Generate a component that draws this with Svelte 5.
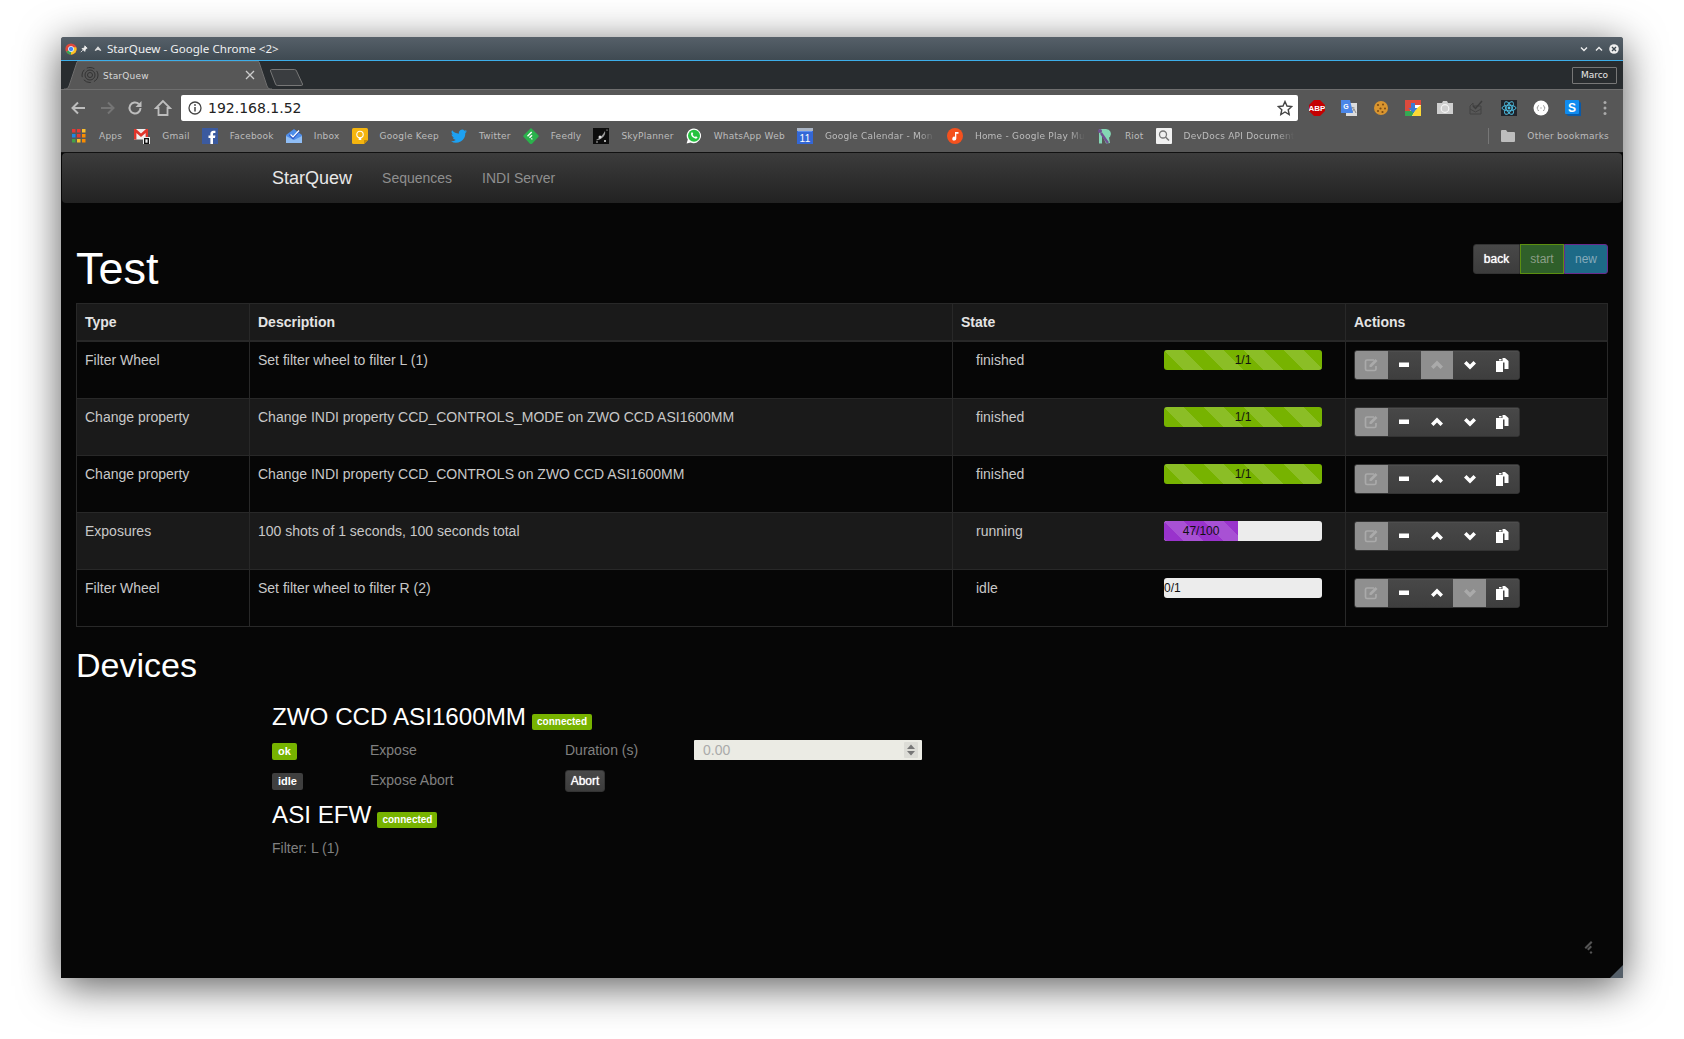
<script>
  const bookmarks = [
    { label: "Apps", svg: `<g><rect x="1" y="1" width="3.5" height="3.5" fill="#e53935"/><rect x="6" y="1" width="3.5" height="3.5" fill="#e53935"/><rect x="11" y="1" width="3.5" height="3.5" fill="#fbc02d"/><rect x="1" y="6" width="3.5" height="3.5" fill="#1e88e5"/><rect x="6" y="6" width="3.5" height="3.5" fill="#e53935"/><rect x="11" y="6" width="3.5" height="3.5" fill="#fb8c00"/><rect x="1" y="11" width="3.5" height="3.5" fill="#43a047"/><rect x="6" y="11" width="3.5" height="3.5" fill="#fbc02d"/><rect x="11" y="11" width="3.5" height="3.5" fill="#fb8c00"/></g>` },
    { label: "Gmail", svg: `<rect y="1" width="14" height="10.5" fill="#eee"/><path d="M0 1h2l5 4.500L12 1h2v10.500h-2.400V5L7 9 2.400 5v6.500H0z" fill="#e0352b"/><rect x="9" y="9" width="7" height="7" fill="#eee"/><rect x="10" y="10" width="5" height="6" fill="#111"/><rect x="11.400" y="11.300" width="2.200" height="3.400" fill="#eee"/>` },
    { label: "Facebook", svg: `<rect width="16" height="16" fill="#3b5a9f"/><path d="M11 16V10h2l.4-2.500H11V6.200c0-.8.3-1.200 1.200-1.200h1.200V2.700h-2C9.400 2.700 8.400 4 8.400 5.800v1.700H6.500V10h1.900v6z" fill="#fff"/>` },
    { label: "Inbox", svg: `<path d="M0 7l8-6 8 6v8H0z" fill="#4f8ee8"/><path d="M0 8l8 4 8-4v7H0z" fill="#8fbdf5"/><path d="M4 6l3 3 6-6.500 1 1-7 8-4-4z" fill="#2a54c8"/><path d="M4.500 6.500l2.500 2.500 6-6.500" fill="none" stroke="#fff" stroke-width="1.200"/>` },
    { label: "Google Keep", svg: `<path d="M0 1.500Q0 0 1.500 0h13Q16 0 16 1.500V12l-4 4H1.500Q0 16 0 14.500z" fill="#f5b50f"/><path d="M12 16v-4h4z" fill="#c98f08"/><circle cx="8" cy="6.500" r="3.200" fill="none" stroke="#fff" stroke-width="1.100"/><path d="M6.700 9.500h2.600v2.500H6.700z" fill="#fff"/>` },
    { label: "Twitter", svg: `<path d="M16 3.200c-.6.300-1.200.4-1.900.5.700-.4 1.200-1 1.400-1.800-.6.400-1.300.6-2 .8a3.300 3.300 0 0 0-5.600 3A9.300 9.300 0 0 1 1.100 2.300a3.300 3.300 0 0 0 1 4.400c-.5 0-1-.2-1.500-.4 0 1.600 1.100 2.900 2.600 3.200-.5.100-1 .2-1.500.1.400 1.300 1.600 2.200 3 2.300A6.600 6.600 0 0 1 0 13.200 9.300 9.300 0 0 0 14.300 5c.7-.4 1.200-1.100 1.700-1.800z" fill="#1da1f2"/>` },
    { label: "Feedly", svg: `<path d="M8 0l7.300 7.300a1.200 1.200 0 0 1 0 1.700L9.500 15.300a2 2 0 0 1-3 0L.7 9a1.200 1.200 0 0 1 0-1.700z" fill="#2bb24c"/><path d="M8.200 3.500L4 7.800l1 1 4.200-4.300zM8.500 6.800L6 9.300l1 1 2.500-2.500zM8.800 10L8 10.800l.9.900.8-.8z" fill="#fff"/>` },
    { label: "SkyPlanner", svg: `<rect width="16" height="16" fill="#0c0c0c"/><path d="M3 12Q9 9 12 3q1 4-3 7T3 12z" fill="#999"/><circle cx="7" cy="9" r="1.500" fill="#ddd"/><circle cx="4" cy="14" r=".8" fill="#ccc"/><circle cx="12" cy="13" r="1" fill="#ddd"/><circle cx="14" cy="2" r=".6" fill="#eee"/>` },
    { label: "WhatsApp Web", svg: `<path d="M8 .5a7.300 7.300 0 0 0-6.200 11.100L.6 15.500l4-1.100A7.300 7.300 0 1 0 8 .5z" fill="#fff"/><circle cx="8" cy="7.800" r="6" fill="#25c23f"/><path d="M5.500 4.500c.5-.5 1-.3 1.200.2l.5 1.200-.6.900c.5 1 1.300 1.800 2.400 2.300l.9-.8 1.300.7c.4.200.4.700 0 1.100-1 1-2.300.7-4-.5C5.300 8.300 4.300 5.800 5.500 4.500z" fill="#fff"/>` },
    { label: "Google Calendar - Mon", cut: true, svg: `<rect y="1" width="16" height="15" fill="#3367d6"/><rect y="0" width="16" height="3" fill="#aab4c4"/><rect x="1" y="3" width="14" height="1" fill="#5a8cf0"/><text x="8" y="14" font-size="10" text-anchor="middle" fill="#fff" font-family="Liberation Sans, sans-serif">11</text>` },
    { label: "Home - Google Play Music", cut: true, svg: `<circle cx="8" cy="8" r="8" fill="#f4511e"/><path d="M8 4h3.500v1.800H9.300v4.700a2 2 0 1 1-1.300-1.800z" fill="#fff"/>` },
    { label: "Riot", svg: `<path d="M2 1h7a5 5 0 0 1 4 8l-1 .5L13 15l-4 .5L6 9H5v6.500H2z" fill="#84d6b4"/><circle cx="3" cy="3" r="2" fill="#6f4f8f"/><path d="M4 5l7 10" stroke="#6f4f8f" stroke-width="2.400"/>` },
    { label: "DevDocs API Documentation", cut: true, svg: `<rect width="16" height="16" rx="1" fill="#f1f1f1"/><circle cx="7" cy="6.500" r="3.500" fill="none" stroke="#777" stroke-width="1.300"/><path d="M9.500 9l3.500 3.500" stroke="#777" stroke-width="1.500"/>` }
  ];

  const extensions = [
    `<path d="M5 0h6l5 5v6l-5 5H5l-5-5V5z" fill="#c40000"/><text x="8" y="11" font-size="8" font-weight="700" text-anchor="middle" fill="#fff" font-family="Liberation Sans, sans-serif">ABP</text>`,
    `<rect x="5" y="3" width="11" height="13" fill="#dcdcdc"/><path d="M10 8l3.500 0M11.800 7v1M10.500 13l2.500-4 2 4" stroke="#8a8a8a" fill="none"/><path d="M0 0h9l3 13H0z" fill="#4a86e8"/><text x="5" y="9" font-size="7" font-weight="700" text-anchor="middle" fill="#fff" font-family="Liberation Sans, sans-serif">G</text>`,
    `<circle cx="8" cy="8" r="7" fill="#d9952f"/><circle cx="5" cy="5" r="1.100" fill="#7a4a12"/><circle cx="10" cy="4.500" r="1" fill="#7a4a12"/><circle cx="7.500" cy="8.500" r="1.100" fill="#7a4a12"/><circle cx="12" cy="8.500" r="1" fill="#7a4a12"/><circle cx="5" cy="11" r="1" fill="#7a4a12"/><circle cx="9.500" cy="12" r="1.100" fill="#7a4a12"/>`,
    `<rect width="16" height="16" fill="#fff"/><path d="M0 0h16v5H8L3 16H0z" fill="#dd4a3d"/><path d="M0 11v5h7l3-5z" fill="#35a853"/><path d="M16 5v11H7l4-7z" fill="#fdd835"/><path d="M6 3h4v5h2.500L8 13 3.500 8H6z" fill="#3a7bd5"/>`,
    `<path d="M0 3h5l1-2h4l1 2h5v11H0z" fill="#cfcfcf"/><circle cx="8" cy="8.500" r="3.800" fill="#cfcfcf" stroke="#f5f5f5" stroke-width="1.200"/>`,
    `<path d="M1 6l3-3v3h8v8H1z" fill="none" stroke="#434343"/><path d="M1 9l5.500 3L12 9" fill="none" stroke="#434343"/><path d="M4 6l2.500 2.500L13 1" fill="none" stroke="#3d3d3d" stroke-width="1.500"/>`,
    `<rect width="16" height="16" fill="#20232a"/><g fill="none" stroke="#4fc3e8" stroke-width=".9"><ellipse cx="8" cy="8" rx="7" ry="2.800"/><ellipse cx="8" cy="8" rx="7" ry="2.800" transform="rotate(60 8 8)"/><ellipse cx="8" cy="8" rx="7" ry="2.800" transform="rotate(120 8 8)"/></g><circle cx="8" cy="8" r="1.400" fill="#4fc3e8"/>`,
    `<circle cx="8" cy="8" r="7.500" fill="#fff"/><path d="M6 5.500Q4.700 5.500 4.700 7T3.800 8q.9 0 .9 1.500T6 10.500M10 5.500q1.300 0 1.300 1.500t.9 1q-.9 0-.9 1.500T10 10.500M7.300 8h1.400" fill="none" stroke="#999" stroke-width=".9"/>`,
    `<path d="M1 14V1h13l2 2v13H3z" fill="#0a5aa8"/><rect width="14" height="14" rx="1" fill="#0f8cf0"/><text x="7" y="11.500" font-size="12" font-weight="700" text-anchor="middle" fill="#fff" font-family="Liberation Sans, sans-serif">S</text>`
  ];

  const steps = [
    { type: "Filter Wheel", desc: "Set filter wheel to filter L (1)", state: "finished", pct: 100, text: "1/1", tone: "green", first: true },
    { type: "Change property", desc: "Change INDI property CCD_CONTROLS_MODE on ZWO CCD ASI1600MM", state: "finished", pct: 100, text: "1/1", tone: "green" },
    { type: "Change property", desc: "Change INDI property CCD_CONTROLS on ZWO CCD ASI1600MM", state: "finished", pct: 100, text: "1/1", tone: "green" },
    { type: "Exposures", desc: "100 shots of 1 seconds, 100 seconds total", state: "running", pct: 47, text: "47/100", tone: "purple" },
    { type: "Filter Wheel", desc: "Set filter wheel to filter R (2)", state: "idle", pct: 0, text: "0/1", tone: "green", last: true }
  ];
</script>

<div class="window">
  <div class="titlebar">
    <svg class="chromeicon" width="12" height="12" viewBox="0 0 16 16">
      <circle cx="8" cy="8" r="7.500" fill="#e0483a" />
      <path d="M8 8L1.500 11.800A7.500 7.500 0 0 0 8 15.500z" fill="#35a853" />
      <path d="M8 8v7.500A7.500 7.500 0 0 0 15 5.500H8z" fill="#f7c325" />
      <circle cx="8" cy="8" r="3.500" fill="#4285f4" stroke="#fff" />
    </svg>
    <svg class="pin" width="8" height="8" viewBox="0 0 10 10"><path d="M6 1l3 3-1 .5-1.500 1.500-.5 2L2.500 4.500l2-.5L6 2.500zM3.500 6.500L1 9" fill="#eee" stroke="#eee" /></svg>
    <svg class="keep" width="8" height="8" viewBox="0 0 12 10"><path d="M6 1l5 6-1 1-4-2-4 2-1-1z" fill="#ddd" /></svg>
    <span class="title">StarQuew - Google Chrome &lt;2&gt;</span>
    <span class="spacer"></span>
    <svg width="10" height="10" viewBox="0 0 10 10"><path d="M2 3.500L5 6.500L8 3.500" fill="none" stroke="#eee" stroke-width="1.400" /></svg>
    <svg width="10" height="10" viewBox="0 0 10 10"><path d="M2 6.500L5 3.500L8 6.500" fill="none" stroke="#eee" stroke-width="1.400" /></svg>
    <svg width="10" height="10" viewBox="0 0 10 10"><circle cx="5" cy="5" r="4.800" fill="#eee" /><path d="M3 3l4 4M7 3l-4 4" stroke="#3d4850" stroke-width="1.400" /></svg>
  </div>

  <div class="tabbar">
    <div class="tab">
      <svg class="tabshape" width="208" height="28" viewBox="0 0 208 28"><path d="M0 28h2q2 0 3-3L13 1q.5-1 2-1h178q1.500 0 2 1l8 24q1 3 3 3h2" fill="#575757" stroke="#6e6e6e" /></svg>
      <svg class="favicon" width="18" height="18" viewBox="0 0 18 18"><g fill="none" stroke="#333"><circle cx="9" cy="9" r="2.500" /><circle cx="9" cy="9" r="5" /><ellipse cx="9" cy="9" rx="8" ry="7.500" stroke-dasharray="8 3" /></g></svg>
      <span>StarQuew</span>
      <svg class="close" width="10" height="10" viewBox="0 0 10 10"><path d="M1 1l8 8M9 1l-8 8" stroke="#ccc" stroke-width="1.300" /></svg>
    </div>
    <svg class="newtab" width="34" height="17" viewBox="0 0 34 17"><path d="M1.500.5h23q1.500 0 2 1.500l6 13q.3 1.500-1 1.500H7.500q-1.500 0-2-1.500L.5 2q-.3-1.500 1-1.500z" fill="#3a3d40" stroke="#777" /></svg>
    <span class="spacer"></span>
    <div class="profile">Marco</div>
  </div>

  <div class="toolbar">
    <svg width="18" height="18" viewBox="0 0 18 18"><path d="M15 9H3M8 3.500L2.500 9 8 14.500" fill="none" stroke="#bdbdbd" stroke-width="2" /></svg>
    <svg width="18" height="18" viewBox="0 0 18 18"><path d="M3 9h12M10 3.500L15.500 9 10 14.500" fill="none" stroke="#757575" stroke-width="2" /></svg>
    <svg width="18" height="18" viewBox="0 0 18 18"><path d="M14.500 9A5.500 5.500 0 1 1 12.800 5" fill="none" stroke="#bdbdbd" stroke-width="2" /><path d="M15.500 2v6h-6z" fill="#bdbdbd" /></svg>
    <svg width="18" height="18" viewBox="0 0 18 18"><path d="M9 2L2 9h2.500v7h9V9H16z" fill="none" stroke="#bdbdbd" stroke-width="1.800" /></svg>
    <div class="omnibox">
      <svg width="14" height="14" viewBox="0 0 14 14"><circle cx="7" cy="7" r="6" fill="none" stroke="#444" stroke-width="1.300" /><path d="M7 6v4.500" stroke="#444" stroke-width="1.500" /><circle cx="7" cy="4" r=".9" fill="#444" /></svg>
      <span class="url">192.168.1.52</span>
      <span class="spacer"></span>
      <svg width="16" height="16" viewBox="0 0 16 16"><path d="M8 1.500l2 4.500 4.800.5-3.600 3.200 1 4.800L8 12l-4.200 2.500 1-4.800L1.200 6.500 6 6z" fill="none" stroke="#444" stroke-width="1.400" /></svg>
    </div>
    <div class="exts">
      {#each extensions as ext}
        <svg width="16" height="16" viewBox="0 0 16 16">{@html ext}</svg>
      {/each}
      <svg class="dots" width="4" height="16" viewBox="0 0 4 16"><circle cx="2" cy="2.500" r="1.500" fill="#aaa" /><circle cx="2" cy="8" r="1.500" fill="#aaa" /><circle cx="2" cy="13.500" r="1.500" fill="#aaa" /></svg>
    </div>
  </div>

  <div class="bookmarks">
    {#each bookmarks as b}
      <div class="bm">
        <svg width="16" height="16" viewBox="0 0 16 16">{@html b.svg}</svg>
        <span class:cut={b.cut}>{b.label}</span>
      </div>
    {/each}
    <span class="spacer"></span>
    <i class="sep"></i>
    <div class="bm other">
      <svg width="14" height="12" viewBox="0 0 14 12"><path d="M0 1q0-1 1-1h4l1.500 2H13q1 0 1 1v8q0 1-1 1H1q-1 0-1-1z" fill="#bdbdbd" /></svg>
      <span>Other bookmarks</span>
    </div>
  </div>

  <div class="app">
    <nav class="navbar">
      <a class="brand" href="#top">StarQuew</a>
      <a href="#top">Sequences</a>
      <a href="#top">INDI Server</a>
    </nav>

    <main>
      <header>
        <h1>Test</h1>
        <div class="btn-group top">
          <button class="btn">back</button>
          <button class="btn start">start</button>
          <button class="btn new">new</button>
        </div>
      </header>

      <table>
        <colgroup>
          <col style="width: 173px" />
          <col style="width: 703px" />
          <col style="width: 393px" />
          <col />
        </colgroup>
        <thead>
          <tr>
            <th>Type</th>
            <th>Description</th>
            <th>State</th>
            <th>Actions</th>
          </tr>
        </thead>
        <tbody>
          {#each steps as step}
            <tr>
              <td>{step.type}</td>
              <td>{step.desc}</td>
              <td>
                <div class="state">
                  <span>{step.state}</span>
                  <div class="progress">
                    {#if step.pct > 0}
                      <div class="bar {step.tone}" style="width: {step.pct}%">{step.text}</div>
                    {:else}
                      <div class="bar-empty">{step.text}</div>
                    {/if}
                  </div>
                </div>
              </td>
              <td>
                <div class="btn-group actions">
                  <button class="off" aria-label="edit">
                    <svg width="14" height="14" viewBox="0 0 14 14"><path d="M10 2H3Q1.500 2 1.500 3.500v7.500Q1.500 12.500 3 12.500h7.500q1.500 0 1.500-1.500V8" fill="none" stroke="#aaa" stroke-width="1.700" /><path d="M5.500 7l6-6 2 2-6 6H5.500z" fill="#aaa" /></svg>
                  </button>
                  <button aria-label="remove">
                    <svg width="10" height="6" viewBox="0 0 10 6"><rect y="0.500" width="10" height="4.500" fill="#fff" /></svg>
                  </button>
                  <button class:off={step.first} aria-label="up">
                    <svg width="12" height="10" viewBox="0 0 12 10"><path d="M6 .5L12 6.500 9.500 9 6 5.500 2.500 9 0 6.500z" fill={step.first ? "#aaa" : "#fff"} /></svg>
                  </button>
                  <button class:off={step.last} aria-label="down">
                    <svg width="12" height="10" viewBox="0 0 12 10"><path d="M6 9.500L12 3.500 9.500 1 6 4.500 2.500 1 0 3.500z" fill={step.last ? "#aaa" : "#fff"} /></svg>
                  </button>
                  <button aria-label="copy">
                    <svg width="13" height="14" viewBox="0 0 13 14"><path d="M0 3h7v11H0z" fill="#fff" /><path d="M3 1h2.500v1.500H3zM6.500 0h2.500l3.500 3v8h-4V4.500H6.500z" fill="#fff" /></svg>
                  </button>
                </div>
              </td>
            </tr>
          {/each}
        </tbody>
      </table>

      <h2>Devices</h2>

      <section class="devices">
        <h3>ZWO CCD ASI1600MM <span class="label ok">connected</span></h3>
        <div class="props">
          <span class="label ok small">ok</span>
          <span>Expose</span>
          <span>Duration (s)</span>
          <div class="number">
            <span>0.00</span>
            <svg width="14" height="16" viewBox="0 0 14 16"><rect width="14" height="16" rx="1" fill="#dcdcd6" /><path d="M7 2.500l4 4.500H3zM7 13.500l4-4.500H3z" fill="#777" /></svg>
          </div>
          <span class="label idle small">idle</span>
          <span>Expose Abort</span>
          <button class="btn abort">Abort</button>
        </div>
        <h3>ASI EFW <span class="label ok">connected</span></h3>
        <p>Filter: L (1)</p>
      </section>
    </main>

    <svg class="feedly" width="14" height="16" viewBox="0 0 14 16"><path d="M8 1L1.500 7.500l1.500 1.500L9.500 2.500zM7.500 5.500L4 9l1.500 1.500L9 7zM8 11l-1.500 1.500L8 14l1.500-1.500z" fill="#555" /></svg>
    <div class="corner"></div>
  </div>
</div>

<style>
  :global(body) {
    background: #fff;
    height: 1039px;
    overflow: hidden;
    font-family: "Liberation Sans", Arial, sans-serif;
  }

  .window {
    position: relative;
    width: 1562px;
    height: 941px;
    margin: 37px 0 0 61px;
    display: flex;
    flex-direction: column;
    border-radius: 3px 3px 0 0;
    background: #575757;
    box-shadow: 0 8px 42px rgba(0, 0, 0, 0.65);
  }

  .spacer {
    flex: 1;
  }

  .titlebar {
    height: 23px;
    display: flex;
    align-items: center;
    gap: 5px;
    padding: 0 4px 0 4px;
    background: linear-gradient(#566069, #3f4a52);
    border-bottom: 1px solid #3daee9;
    border-radius: 3px 3px 0 0;
  }

  .chromeicon,
  .pin,
  .keep {
    flex: none;
  }

  .pin {
    margin: 0 1px 0 -2px;
  }

  .title {
    font: 11.6px "Noto Sans", sans-serif;
    color: #eff0f1;
  }

  .tabbar {
    height: 28px;
    display: flex;
    align-items: center;
    background: #282c2f;
    border-bottom: 1px solid #6e6e6e;
    padding-right: 6px;
  }

  .tab {
    position: relative;
    width: 208px;
    height: 28px;
    margin-left: 3px;
    display: flex;
    align-items: center;
    font: 9px "DejaVu Sans", sans-serif;
    letter-spacing: 0.2px;
    color: #d8d8d8;
  }

  .tabshape {
    position: absolute;
    left: 0;
    top: 0;
  }

  .favicon {
    position: relative;
    margin-left: 17px;
  }

  .tab span {
    position: relative;
    margin-left: 4px;
    padding-top: 1px;
  }

  .close {
    position: absolute;
    left: 181px;
    top: 9px;
  }

  .newtab {
    margin: 4px 0 0 -2px;
  }

  .profile {
    width: 45px;
    height: 17px;
    box-sizing: border-box;
    border: 1px solid #777;
    border-radius: 1px;
    font: 9px/15px "DejaVu Sans", sans-serif;
    text-align: center;
    color: #e8e8e8;
  }

  .toolbar {
    height: 26px;
    padding: 5px 0 0 9px;
    display: flex;
    align-items: center;
    background: #575757;
    gap: 10px;
  }

  .omnibox {
    width: 1117px;
    height: 26px;
    margin-left: -1px;
    box-sizing: border-box;
    display: flex;
    align-items: center;
    gap: 6px;
    padding: 0 5px 1px 7px;
    background: #fff;
    border-radius: 2px;
    box-shadow: 0 1px 1px rgba(0, 0, 0, 0.4);
  }

  .url {
    font: 14px "DejaVu Sans", sans-serif;
    color: #222;
  }

  .exts {
    display: flex;
    align-items: center;
    gap: 16px;
    margin-left: 1px;
  }

  .dots {
    margin-left: 6px;
  }

  .bookmarks {
    height: 32px;
    box-sizing: border-box;
    display: flex;
    align-items: center;
    gap: 12px;
    padding: 0 14px 1px 10px;
    background: #575757;
    border-bottom: 1px solid #111;
  }

  .bm {
    display: flex;
    align-items: center;
    gap: 12px;
    font: 9px "DejaVu Sans", sans-serif;
    letter-spacing: 0.23px;
    color: #bdbdbd;
  }

  .bm svg {
    flex: none;
  }

  .bm .cut {
    width: 110px;
    overflow: hidden;
    white-space: nowrap;
    -webkit-mask-image: linear-gradient(90deg, #000 85%, transparent);
    mask-image: linear-gradient(90deg, #000 85%, transparent);
  }

  .sep {
    width: 1px;
    height: 16px;
    background: #777;
  }

  .app {
    position: relative;
    flex: 1;
    background: #060606;
    overflow: hidden;
  }

  .navbar {
    height: 50px;
    margin: 0 1px;
    box-sizing: border-box;
    padding-left: 210px;
    display: flex;
    align-items: center;
    gap: 30px;
    border-radius: 4px;
    background: linear-gradient(#3c3c3c, #222);
  }

  .navbar a {
    font-size: 14px;
    color: #8f8f8f;
    text-decoration: none;
  }

  .navbar .brand {
    font-size: 18px;
    color: #e8e8e8;
  }

  main {
    padding: 0 15px;
  }

  header {
    display: flex;
    justify-content: space-between;
    align-items: flex-start;
    height: 100px;
  }

  h1 {
    margin: 43px 0 0;
    font-size: 45px;
    line-height: 46px;
    font-weight: 400;
    color: #fff;
  }

  .btn-group {
    display: inline-flex;
  }

  .btn-group.top {
    margin-top: 41px;
  }

  .btn {
    height: 30px;
    padding: 0 10px;
    font: 12px "Liberation Sans", sans-serif;
    color: #fff;
    text-shadow: 0 0 1px #fff;
    background: linear-gradient(#484848, #3c3c3c);
    border: 1px solid #333;
    border-radius: 3px;
  }

  .top .btn {
    border-radius: 0;
    width: 44px;
    padding: 0;
  }

  .top .btn:first-child {
    width: 47px;
    border-radius: 3px 0 0 3px;
  }

  .top .btn:last-child {
    border-radius: 0 3px 3px 0;
  }

  .btn.start {
    background: #2f5f2a;
    border-color: #5c8f10;
    color: #8c9e88;
    text-shadow: none;
  }

  .btn.new {
    background: #1d6a87;
    border-color: #6a2a8c;
    color: #86aabb;
    text-shadow: none;
  }

  table {
    width: 100%;
    table-layout: fixed;
    border-collapse: collapse;
    font-size: 14px;
    color: #c8c8c8;
    border: 1px solid #282828;
  }

  th,
  td {
    padding: 8px;
    text-align: left;
    vertical-align: top;
    line-height: 20px;
    border: 1px solid #282828;
  }

  th {
    height: 20px;
    padding-top: 8px;
    padding-bottom: 8px;
    background: #1a1a1a;
    color: #e4e4e4;
    border-bottom-width: 2px;
  }

  td {
    height: 40px;
  }

  tbody tr:nth-child(even) td {
    background: #1a1a1a;
  }

  .state {
    display: grid;
    grid-template-columns: 188px 158px;
    padding-left: 15px;
  }

  .progress {
    height: 20px;
    overflow: hidden;
    background: #ececec;
    border-radius: 3px;
    font-size: 12px;
    color: #111;
  }

  .bar {
    height: 20px;
    text-align: center;
    background-size: 40px 40px;
    background-image: linear-gradient(
      45deg,
      rgba(255, 255, 255, 0.15) 25%,
      transparent 25%,
      transparent 50%,
      rgba(255, 255, 255, 0.15) 50%,
      rgba(255, 255, 255, 0.15) 75%,
      transparent 75%,
      transparent
    );
  }

  .green {
    background-color: #77b300;
  }

  .purple {
    background-color: #9933cc;
  }

  .actions {
    background: #444;
    border-radius: 3px;
    border: 1px solid #333;
    vertical-align: top;
  }

  .actions button {
    width: 32.8px;
    height: 28px;
    padding: 0;
    display: flex;
    align-items: center;
    justify-content: center;
    background: linear-gradient(#484848, #3e3e3e);
    border: 0;
    box-shadow: inset 0 1px 0 #4e4e4e;
  }

  .actions button:first-child {
    border-radius: 2px 0 0 2px;
  }

  .actions button:last-child {
    border-radius: 0 2px 2px 0;
  }

  .actions button.off {
    background: #8f8f8f;
    box-shadow: none;
  }

  h2 {
    margin: 20px 0 0;
    font-size: 34px;
    line-height: 37px;
    font-weight: 400;
    color: #fff;
  }

  .devices {
    margin: 20px 0 0 196px;
    color: #808080;
    font-size: 14px;
  }

  h3 {
    margin: 0;
    font-size: 24.2px;
    line-height: 26px;
    font-weight: 400;
    color: #fff;
    display: flex;
    align-items: center;
    gap: 6px;
  }

  .label {
    display: inline-block;
    height: 16px;
    padding: 0 5px;
    border-radius: 2px;
    font-size: 10px;
    font-weight: 700;
    line-height: 16px;
    color: #fff;
  }

  h3 .label {
    position: relative;
    top: 5px;
  }

  .label.ok {
    background: #77b300;
  }

  .label.idle {
    background: #3f3f3f;
  }

  .label.small {
    justify-self: start;
    margin-top: 3px;
    height: 17px;
    padding: 0 6px;
    font-size: 11px;
    line-height: 17px;
  }

  .props {
    display: grid;
    grid-template-columns: 98px 195px 129px 228px;
    grid-template-rows: 20px 22px;
    row-gap: 10px;
    align-items: start;
    margin: 10px 0 10px;
    line-height: 20px;
  }

  .number {
    height: 20px;
    box-sizing: border-box;
    display: flex;
    align-items: center;
    justify-content: space-between;
    padding: 0 4px 0 9px;
    background: #ebebe4;
    color: #aaa;
    border-radius: 1px;
  }

  .abort {
    width: 40px;
    height: 22px;
    padding: 0;
  }

  p {
    margin: 10px 0 0;
    line-height: 20px;
  }

  .feedly {
    position: absolute;
    right: 26px;
    bottom: 22px;
  }

  .corner {
    position: absolute;
    right: 0;
    bottom: 0;
    width: 13px;
    height: 13px;
    background: #555f69;
    clip-path: polygon(100% 0, 100% 100%, 0 100%);
  }
</style>
